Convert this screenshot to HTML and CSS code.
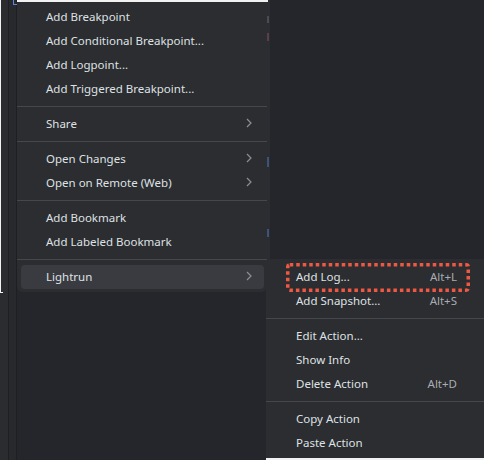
FILE: index.html
```html
<!DOCTYPE html>
<html>
<head>
<meta charset="utf-8">
<link rel="stylesheet" href="styles.css">
</head>
<body>
<div class="editor">
  <div class="gutter">
    <div class="g-a"></div>
    <div class="g-line"></div>
    <div class="g-b"></div>
    <div class="g-line"></div>
  </div>
  <div class="code">
    <div class="stripe">
      <span class="mark m-gray"></span>
      <span class="mark m-red"></span>
      <span class="mark m-blue"></span>
      <span class="mark m-blue2"></span>
    </div>
  </div>

  <span class="fold-icon"></span>

  <div class="menu menu-main">
    <div class="item"><span class="label">Add Breakpoint</span></div>
    <div class="item"><span class="label">Add Conditional Breakpoint...</span></div>
    <div class="item"><span class="label">Add Logpoint...</span></div>
    <div class="item"><span class="label">Add Triggered Breakpoint...</span></div>
    <div class="sep"></div>
    <div class="item"><span class="label">Share</span><svg class="chev" width="6" height="10" viewBox="0 0 6 10"><path d="M1 1 L5 5 L1 9" fill="none" stroke="#8c8f94" stroke-width="1.2"/></svg></div>
    <div class="sep"></div>
    <div class="item"><span class="label">Open Changes</span><svg class="chev" width="6" height="10" viewBox="0 0 6 10"><path d="M1 1 L5 5 L1 9" fill="none" stroke="#8c8f94" stroke-width="1.2"/></svg></div>
    <div class="item"><span class="label">Open on Remote (Web)</span><svg class="chev" width="6" height="10" viewBox="0 0 6 10"><path d="M1 1 L5 5 L1 9" fill="none" stroke="#8c8f94" stroke-width="1.2"/></svg></div>
    <div class="sep"></div>
    <div class="item"><span class="label">Add Bookmark</span></div>
    <div class="item"><span class="label">Add Labeled Bookmark</span></div>
    <div class="sep"></div>
    <div class="item active"><span class="label">Lightrun</span><svg class="chev" width="6" height="10" viewBox="0 0 6 10"><path d="M1 1 L5 5 L1 9" fill="none" stroke="#8c8f94" stroke-width="1.2"/></svg></div>
  </div>

  <div class="menu menu-sub">
    <div class="item"><span class="label">Add Log...</span><span class="key">Alt+L</span></div>
    <div class="item"><span class="label">Add Snapshot...</span><span class="key">Alt+S</span></div>
    <div class="sep"></div>
    <div class="item"><span class="label">Edit Action...</span></div>
    <div class="item"><span class="label">Show Info</span></div>
    <div class="item"><span class="label">Delete Action</span><span class="key">Alt+D</span></div>
    <div class="sep"></div>
    <div class="item"><span class="label">Copy Action</span></div>
    <div class="item"><span class="label">Paste Action</span></div>
  </div>

  <svg class="annot" width="184" height="29" viewBox="0 0 184 29">
    <rect x="1.75" y="1.75" width="180.5" height="25.5" rx="2" fill="none" stroke="#ef5843" stroke-width="3.5" stroke-dasharray="3.5 3"/>
  </svg>

  <div class="frame frame-top"></div>
  <div class="frame frame-left"></div>
  <div class="frame frame-stub"></div>
  <div class="frame frame-bottom"></div>
</div>
</body>
</html>
```

FILE: styles.css
```css
* { box-sizing: border-box; }
html, body { margin: 0; padding: 0; }
body {
  width: 484px;
  height: 460px;
  overflow: hidden;
  background: #25262b;
  font-family: "Noto Sans", "Liberation Sans", sans-serif;
  font-size: 11.5px;
  color: #dfe1e5;
}
.editor {
  position: relative;
  width: 484px;
  height: 460px;
  display: flex;
  background: #25262b;
}
.gutter {
  width: 17px;
  display: flex;
  flex: none;
}
.g-a { width: 8px; background: #2a2c30; }
.g-b { width: 7px; background: #27292d; }
.g-line { width: 1px; background: #1e1f22; }
.code {
  flex: 1;
  display: flex;
}
.stripe {
  margin-left: 250px;
  width: 3px;
  height: 460px;
  background: #2b2d30;
  display: flex;
  flex-direction: column;
}
.mark { display: block; width: 2px; }
.m-gray { margin-top: 16px; height: 7px; background: #4a4c51; }
.m-red { margin-top: 10px; height: 8px; background: #5a3f45; }
.m-blue { margin-top: 116px; height: 10px; background: #3d5478; }
.m-blue2 { margin-top: 62px; height: 8px; background: #3d5478; }

.fold-icon {
  position: absolute;
  left: 13px;
  top: -1px;
  width: 5px;
  height: 6px;
  border-left: 1.5px solid #5a87e0;
  border-bottom: 1.5px solid #5a87e0;
}

.menu {
  position: absolute;
  background: #2b2d30;
  display: flex;
  flex-direction: column;
}
.menu-main {
  left: 17px;
  top: 0;
  width: 250px;
  padding: 5px 0 3px;
  border-radius: 0 0 6px 6px;
}
.menu-sub {
  left: 266px;
  top: 259px;
  width: 218px;
  padding: 6px 0 3px;
  border-radius: 6px 0 0 0;
}
.item {
  height: 24px;
  display: flex;
  align-items: center;
  justify-content: space-between;
  white-space: nowrap;
  padding-bottom: 2px;
}
.menu-main .item {
  margin: 0 3px 0 4px;
  padding-left: 25px;
  padding-right: 12px;
  border-radius: 4px;
}
.menu-sub .item {
  padding-left: 30px;
  padding-right: 27px;
}
.item.active { background: #393b40; }
.key { color: #a9acb2; }
.chev { display: block; }
.sep {
  height: 11px;
  display: flex;
  align-items: center;
}
.sep::before {
  content: "";
  display: block;
  width: 100%;
  height: 1px;
  background: #45474c;
}
.annot {
  position: absolute;
  left: 286px;
  top: 263px;
}
.frame { position: absolute; background: #f2f2f2; }
.frame-top { left: 17px; top: 0; width: 251px; height: 2px; }
.frame-left { left: 0; top: 0; width: 1px; height: 293px; }
.frame-stub { left: 0; top: 292px; width: 3px; height: 1px; }
.frame-bottom { left: 266px; top: 458px; width: 218px; height: 2px; }
```
